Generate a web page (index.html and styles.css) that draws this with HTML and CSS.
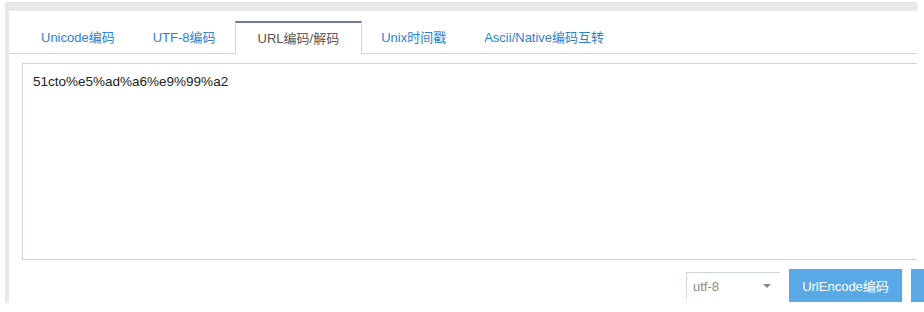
FILE: index.html
```html
<!DOCTYPE html>
<html lang="zh-CN">
<head>
    <meta charset="UTF-8">
    <meta name="viewport" content="width=device-width, initial-scale=1.0">
    <title>URL编码/解码</title>
    <link rel="stylesheet" href="styles.css">
</head>
<body>
    <div class="frame">
        <ul class="tabs">
            <li class="tab">Unicode编码</li>
            <li class="tab">UTF-8编码</li>
            <li class="tab active">URL编码/解码</li>
            <li class="tab">Unix时间戳</li>
            <li class="tab">Ascii/Native编码互转</li>
        </ul>

        <div class="panel">
            <div class="editor">51cto%e5%ad%a6%e9%99%a2</div>

            <div class="actions">
                <div class="charset">
                    <span>utf-8</span>
                    <span class="caret"></span>
                </div>
                <button type="button" class="btn">UrlEncode编码</button>
                <!-- decode button sits mostly past the right edge -->
                <button type="button" class="btn" title="UrlDecode解码"></button>
            </div>
        </div>
    </div>
</body>
</html>
```

FILE: styles.css
```css
html,
body {
    overflow: hidden;
}

body {
    margin: 0;
    padding: 2px 0 0 5px;
    background-color: #fff;
    font-family: "Liberation Sans", "Noto Sans CJK SC", sans-serif;
    font-size: 13px;
    color: #333;
}

.frame {
    width: 908px;
    height: 292px;
    border-top: 9px solid #e8e8e8;
    border-left: 4px solid #e8e8e8;
}

/* tab strip */
.tabs {
    display: flex;
    list-style: none;
    margin: 0;
    padding: 10px 0 0 13px;
    border-bottom: 1px solid #cfd5e0;
}

.tab {
    height: 32px;
    line-height: 32px;
    padding: 0 18px;
    margin-bottom: -1px;
    border: 1px solid transparent;
    border-bottom: none;
    color: #2f7fd3;
    white-space: nowrap;
}

.tab.active {
    height: 31px;
    line-height: 31px;
    padding: 0 22px;
    background-color: #fff;
    color: #555;
    border-color: #cfd5e0;
    border-top: 2px solid #6f7c93;
}

.panel {
    padding: 9px 0 0 13px;
}

.editor {
    height: 179px;
    padding: 8px 10px;
    line-height: 20px;
    font-size: 13.5px;
    border: 1px solid #cdd2e0;
    border-right: none;
    color: #222;
}

/* bottom row */
.actions {
    display: flex;
    align-items: center;
    justify-content: flex-end;
    gap: 9px;
    margin: 9px -107px 0 0;
}

.charset {
    display: flex;
    align-items: center;
    justify-content: space-between;
    box-sizing: border-box;
    width: 94px;
    height: 27px;
    padding: 0 9px 0 6px;
    border-top: 1px solid #cfd5e0;
    border-left: 1px solid #cfd5e0;
    color: #8a8a8a;
}

.caret {
    width: 0;
    height: 0;
    border-left: 4px solid transparent;
    border-right: 4px solid transparent;
    border-top: 4px solid #888;
}

.btn {
    width: 113px;
    height: 33px;
    padding: 0;
    border: none;
    background-color: #58a9e5;
    color: #fff;
    font-family: inherit;
    font-size: 13px;
    cursor: pointer;
}
```
